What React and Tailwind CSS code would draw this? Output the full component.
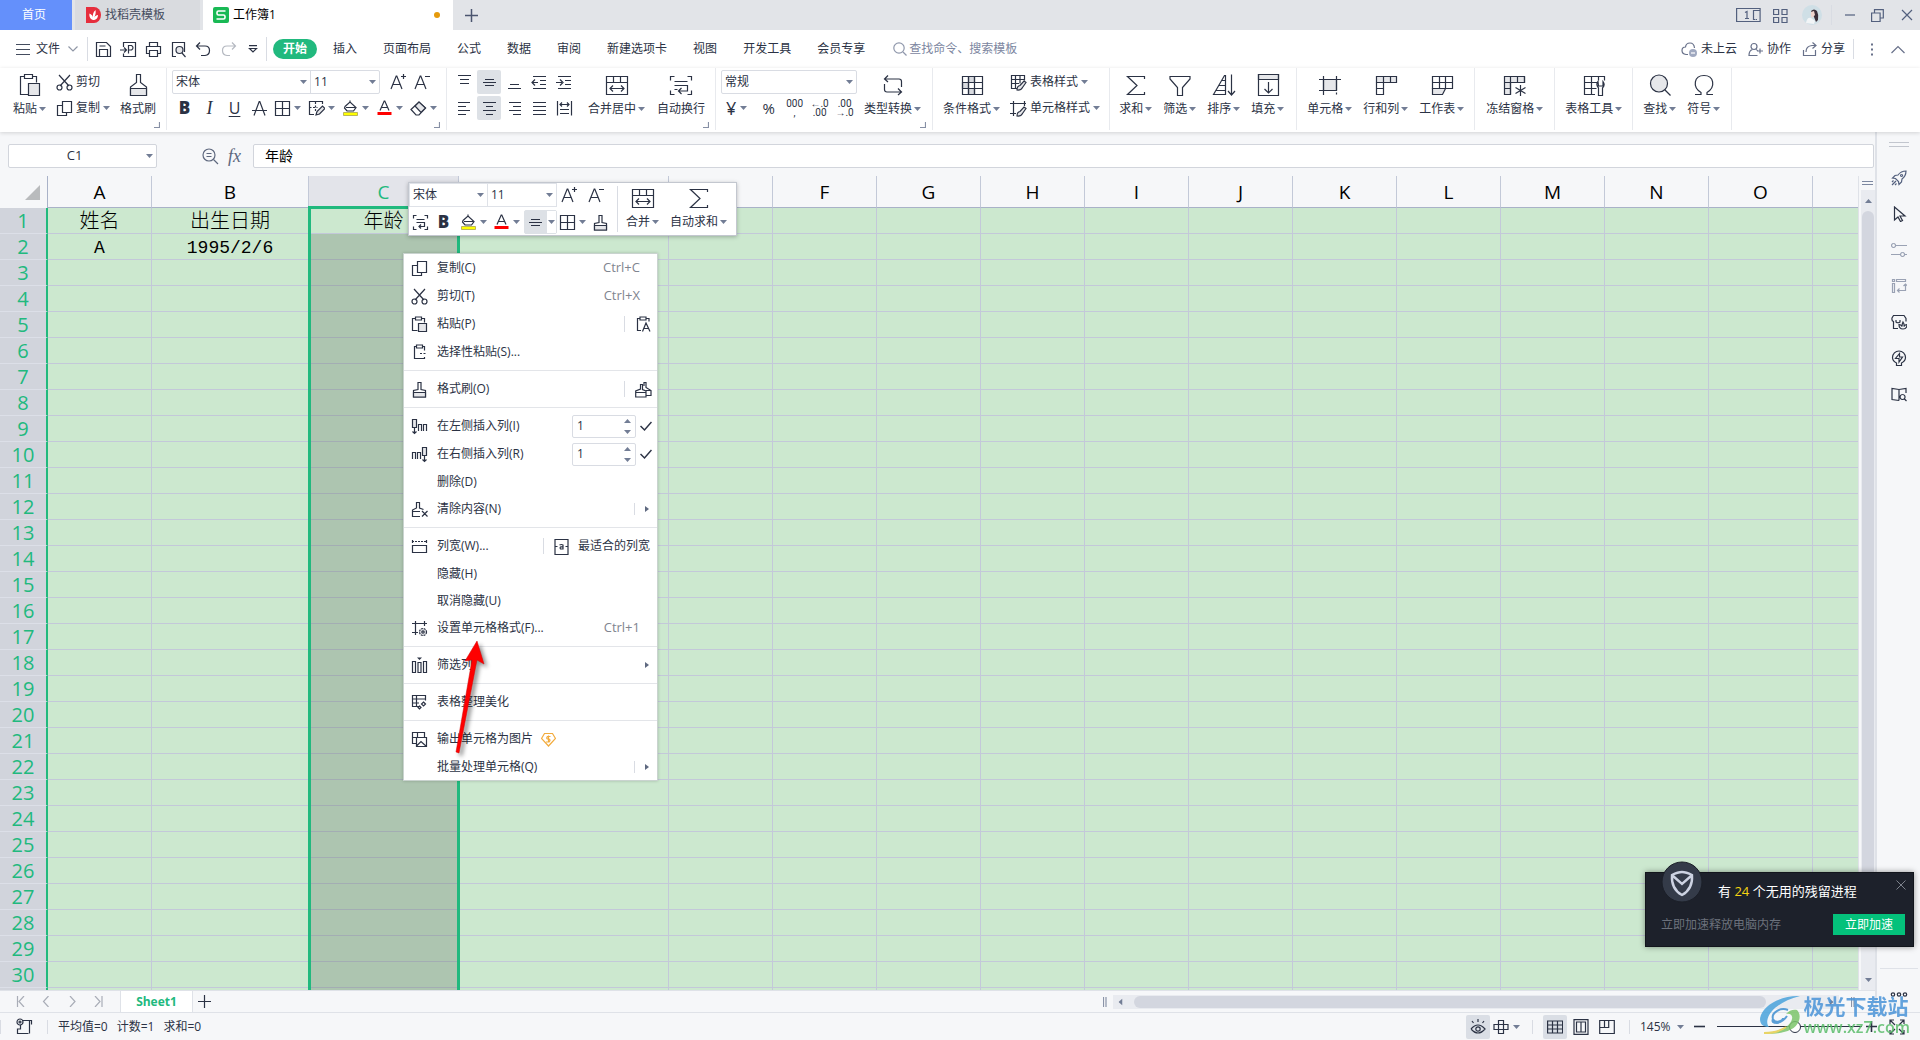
import { clsx } from 'clsx';

const Svg = ({ w = 16, h = w, className, children }) => (
  <svg
    width={w}
    height={h}
    viewBox={`0 0 ${w} ${h}`}
    fill="none"
    stroke="currentColor"
    strokeWidth="1.2"
    className={clsx('shrink-0', className)}
    aria-hidden="true"
  >
    {children}
  </svg>
);

const Caret = ({ className }) => (
  <svg width="7" height="4" viewBox="0 0 7 4" className={clsx('shrink-0 fill-[#727d95]', className)} aria-hidden="true">
    <path d="M0 0h7L3.5 4z" />
  </svg>
);

const Divider = ({ className }) => <div className={clsx('w-px shrink-0 bg-[#d9dce3]', className)} />;

/* ---------- ribbon icons, 24px ---------- */

const PasteBig = () => (
  <Svg w={24}>
    <path d="M6 3.5H2.5v18h8M15 3.5h3.5v6M6.500 1.500h8v4h-8z" />
    <path d="M10.500 10.500h11v12h-11z" fill="#e6e7ea" />
  </Svg>
);
const BrushBig = () => (
  <Svg w={24}>
    <path d="M10.500 1.500h4v8l6 4.500v8.500h-16V14l6-4.500z" />
    <path d="M4.500 15.500h16v7h-16z" fill="#e6e7ea" />
  </Svg>
);
const MergeBig = () => (
  <Svg w={24}>
    <path d="M1.500 3.500h21v18h-21zM1.500 9.500h21M8.500 3.500v6M15.500 3.500v6M5 15.500h14M8 12.500l-3 3 3 3M16 12.500l3 3-3 3" />
  </Svg>
);
const WrapBig = () => (
  <Svg w={24}>
    <path d="M5.500 3.500h-4v4M18.500 3.500h4v4M5.500 21.500h-4v-4M18.500 21.500h4v-4M5.500 8.500h13M5.500 12.500h13v5.500H10M12.500 15l-3 3 3 3M5.500 16.500h3" />
  </Svg>
);
const ConvertBig = () => (
  <Svg w={24}>
    <path d="M7 2.500L3.500 6l3.500 3M3.500 6H18q2.500 0 2.500 2.500V14M17 15.500l3.500 3.500-3.500 3M20.500 19H6q-2.500 0-2.500-2.500V11" />
  </Svg>
);
const CondBig = () => (
  <Svg w={24}>
    <path d="M8.500 3.500h6v6h-6zM2.500 9.500h6v6h-6zM8.500 15.500h6v6h-6z" fill="#d9dbe0" />
    <path d="M2.500 3.500h20v18h-20zM2.500 9.500h20M2.500 15.500h20M8.500 3.500v18M14.500 3.500v18" />
  </Svg>
);
const SumBig = () => (
  <Svg w={24}>
    <path d="M20.500 6V3.500h-17L13 12.500l-9.500 9h17V19" />
  </Svg>
);
const FilterBig = () => (
  <Svg w={24}>
    <path d="M2 3.500h20v2.500l-7.500 8.500v8h-5v-8L2 6z" />
  </Svg>
);
const SortBig = () => (
  <Svg w={24}>
    <path d="M1.500 21.500L12.500 2.500h1v19zM4 17.500h9.500M7 12.500h6.500M10 7.500h3.500M19.500 1.500v20M16 18l3.500 4 3.500-4" />
  </Svg>
);
const FillBig = () => (
  <Svg w={24}>
    <path d="M2.500 1.500h20v5h-20z" fill="#e6e7ea" />
    <path d="M2.500 1.500h20v21h-20zM12.500 9v11M8.500 16l4 4 4-4" />
  </Svg>
);
const CellBig = () => (
  <Svg w={24}>
    <path d="M5.500 6.500h13v11h-13z" fill="#e6e7ea" />
    <path d="M1 6.500h22M1 17.500h18M5.500 3v19M18.500 3v14.500M18.500 19.500v2" />
  </Svg>
);
const RowColBig = () => (
  <Svg w={24}>
    <path d="M2.500 3.500h20v6h-20z" fill="#e6e7ea" />
    <path d="M2.500 9.500v12h7v-18M2.500 15.500h7M16.500 3.500v6" />
  </Svg>
);
const SheetBig = () => (
  <Svg w={24}>
    <path d="M2.500 15.500h13l-3 6h-10z" fill="#e6e7ea" />
    <path d="M2.500 3.500h20v12h-20zM2.500 9.500h20M9.500 3.500v12M15.500 3.500v12" />
  </Svg>
);
const FreezeBig = () => (
  <Svg w={24}>
    <path d="M1.500 3.500h20v6h-14v12h-6z" fill="#e6e7ea" />
    <path d="M1.500 9.500h20v-6M7.500 3.500v18M14.500 3.500v6M1.500 15.500h6M17.500 12v11M12.500 14.500l10 6M22.500 14.500l-10 6" />
  </Svg>
);
const ToolBig = () => (
  <Svg w={24}>
    <path d="M13 21.500H2.500v-18h20v4M2.500 9.500h13M2.500 15.500h12M9.500 3.500v18M16.500 3.500v4" />
    <path d="M16 8.500q-2.500 3 .500 6.500v7.500h4v-7.500q3-3 .5-6.500v4.500h-4.500z" fill="#fff" />
  </Svg>
);
const FindBig = () => (
  <Svg w={24}>
    <circle cx="11" cy="10.500" r="8.500" fill="#e6e7ea" />
    <path d="M17 17l5.500 5.500" />
  </Svg>
);
const OmegaBig = () => (
  <Svg w={24}>
    <path d="M3 21.500h6v-2C0 14 2 2.500 12 2.500S24 14 15 19.500v2h6" />
  </Svg>
);

/* ---------- small icons ---------- */

const Scissors = () => (
  <Svg w={17}>
    <path d="M3 1l10 11M14 1L4 12" />
    <circle cx="3.500" cy="13.500" r="2.500" />
    <circle cx="13.500" cy="13.500" r="2.500" />
  </Svg>
);
const Copy = () => (
  <Svg w={17}>
    <path d="M6.500 1.500h9v11h-9zM6.500 5.500h-5v10h9v-3" />
  </Svg>
);
const Paste = () => (
  <Svg w={17}>
    <path d="M4.500 2.500h-3v12h5M11 2.500h2.500v4M4.500 1h6v3h-6z" />
    <path d="M7.500 7.500h8v8h-8z" fill="#e6e7ea" />
  </Svg>
);
const PasteSpecial = () => (
  <Svg w={17}>
    <path d="M5.500 2.500h-2v12h10v-1.500M12 2.500h1.500v4M5.500 1h6v3h-6z" />
    <path d="M9 9.500h7" strokeDasharray="2 1.500" />
  </Svg>
);
const PasteText = () => (
  <Svg w={17}>
    <path d="M5 2.500H2.500v12H6M11 2.500h3v3M5 1h6v3H5zM7.500 15.500L11 7l4 8.500M8.500 12.500h5" />
  </Svg>
);
const Brush = () => (
  <Svg w={17}>
    <path d="M7 1.500h3v7l4.500 1v6.500h-12V9.500l4.500-1z" />
    <path d="M2.500 11.500h12v4.500h-12z" fill="#e6e7ea" />
  </Svg>
);
const Brushes = () => (
  <Svg w={17}>
    <path d="M5.500 3.500h2v5l3.500 1.500v6H.700v-6l4.800-2zM.700 11.500H11M9 5V1.500h2v5l5 3v5h-5M11 9.500h5" />
  </Svg>
);
const InsertLeft = () => (
  <Svg w={17}>
    <path d="M1.500 1.500h4v8h-4z" fill="#e6e7ea" />
    <path d="M3.500 9.500v6M1.500 13.500l2 2 2-2M7.500 13v-6.500h3V13M12.500 13v-6.500h3V13" />
  </Svg>
);
const InsertRight = () => (
  <Svg w={17}>
    <path d="M11.500 1.500h4v8h-4z" fill="#e6e7ea" />
    <path d="M13.500 9.500v6M11.500 13.500l2 2 2-2M1.500 13v-6.500h3V13M6.500 13v-6.500h3V13" />
  </Svg>
);
const ClearContent = () => (
  <Svg w={17}>
    <path d="M9 15.500H1.500V9l4-2V1.500h3V7l4 1.500M1.500 10.500H9M11 10l5.500 5.500M16.500 10L11 15.500" />
  </Svg>
);
const ColWidth = () => (
  <Svg w={17}>
    <path d="M1.500 7.500h14v7h-14z" />
    <path d="M1 3.500h15" strokeDasharray="2 1" />
    <path d="M1.500 2v3M15.500 2v3" />
  </Svg>
);
const BestFit = () => (
  <Svg w={17}>
    <path d="M2 1.500h13v15H2zM2 8.500h2.500M12.500 8.500H15" />
    <path d="M6.500 7q2-1 3.500 0v4H7.500q-1-1.500.500-2.200H10" />
  </Svg>
);
const FormatCell = () => (
  <Svg w={17}>
    <path d="M1 3.500h15M4.500 1v14M1 12.500h6M13.500 1v5" />
    <circle cx="12" cy="12" r="3.500" fill="#e6e7ea" strokeDasharray="2 .8" />
    <circle cx="12" cy="12" r="1.200" />
  </Svg>
);
const FilterCol = () => (
  <Svg w={17}>
    <path d="M1.500 4.500h3v11h-3zM7 5.500h3v10H7zM12.500 4.500h3v11h-3z" />
    <path d="M6 .500h5L8.500 3z" fill="currentColor" stroke="none" />
  </Svg>
);
const Beautify = () => (
  <Svg w={17}>
    <path d="M8 12.500H1.500v-11h13v5M1.500 5H14.500M1.500 9H8M5.500 1.500v11M12.500 8l2 2-2 2-2-2zM8.500 12l1.500 1.500L8.500 15 7 13.500z" />
  </Svg>
);
const ExportImg = () => (
  <Svg w={17}>
    <path d="M5.500 12.500h-4v-11h12v5M1.500 6.500h4M6.500 1.500v5M5.500 6.500h10v9h-10zM5.500 15l4.500-4.500 5.500 5" />
  </Svg>
);
const Coin = () => (
  <svg width="15" height="15" viewBox="0 0 15 15" fill="none" stroke="#f2ab3d" strokeWidth="1.200" className="ml-2" aria-hidden="true">
    <path d="M3.500 1.500h8l3 5-7 7.500-7-7.500z" />
    <path d="M9.500 4.500h-3q-1.500 1.500 0 2.500h1.500q2 1 0 3h-3M7.500 3.500v7" />
  </svg>
);
const Bucket = () => (
  <Svg w={17}>
    <path d="M3 6.500L8 2l6 5.500-2.500 3.500H5L2.500 8zM4 7.500h9M8 2V.500" />
    <path d="M1.500 12.500h14v3h-14z" fill="#ffff00" stroke="#a9a44f" strokeWidth=".8" />
  </Svg>
);
const FontColor = () => (
  <Svg w={17}>
    <path d="M4 10.500L8.200 1h.600L13 10.500M5.500 7.500h6" />
    <path d="M1.500 13.500h14" stroke="#ff0000" strokeWidth="3" />
  </Svg>
);
const Strike = () => (
  <Svg w={17}>
    <path d="M3 15.500L8.200 1.500h.600L14 15.500M1 10.500h15" />
  </Svg>
);
const Borders = () => (
  <Svg w={17}>
    <path d="M1.500 1.500h14v14h-14zM8.500 1.500v14M1.500 8.500h14" />
  </Svg>
);
const PenBorder = () => (
  <Svg w={17}>
    <path d="M14.500 4v-2.500h-13v13H6" />
    <path d="M1.500 7.500h8M7.500 2v9" strokeDasharray="2 1.500" />
    <path d="M8 15l1-3.500L14.500 6 17 8.500l-5.500 5.500z" fill="#e6e7ea" />
  </Svg>
);
const Eraser = () => (
  <Svg w={17}>
    <path d="M1 9.500L9 2l6.500 6L9 15H6z" />
    <path d="M5 6l6 6.500 4.500-4.500L9 2z" fill="#e6e7ea" />
  </Svg>
);
const WrapSmall = () => (
  <Svg w={17}>
    <path d="M4.500 1.500h-3v3M12.500 1.500h3v3M4.500 15.500h-3v-3M12.500 15.500h3v-3M4.500 5.500h8M4.500 8.500h8v4H7M9 10.500l-2 2 2 2" />
  </Svg>
);
const GrowFont = () => (
  <Svg w={18}>
    <path d="M2 16L7.200 3h.600L13 16M4 11.500h7M12 3.500h5M14.500 1v5" />
  </Svg>
);
const ShrinkFont = () => (
  <Svg w={18}>
    <path d="M2 16L7.200 3h.600L13 16M4 11.500h7M12 3.500h5" />
  </Svg>
);
const TableStyle = () => (
  <Svg w={17}>
    <path d="M7 14.500H1.500v-13h13v5M1.500 5.500h13M1.500 9.500H9M5.500 1.500v13M10 1.500v8" />
    <path d="M7 16q0-4 3-4.500l4-4.500 2 1.500-3.500 5q-1.500 3-5.500 2.500z" fill="#e6e7ea" />
  </Svg>
);
const CellStyle = () => (
  <Svg w={17}>
    <path d="M0 3.500h16M3.500 1v15M0 13.500h6M14.500 1v5" />
    <path d="M7 16q0-4 3-4.500l4-4.500 2 1.500-3.500 5q-1.500 3-5.500 2.500z" fill="#e6e7ea" />
  </Svg>
);

const alignPaths = [
  'M2 1.500h13M4 5.500h9M4 9.500h9',
  'M2 8.500h13M4 5.500h9M4 11.500h9',
  'M2 14.500h13M4 10.500h9',
  'M2 2.500h13M9 6.500h6M9 10.500h6M2 14.500h13M1 8.500h6M4 5.500l-3 3 3 3',
  'M2 2.500h13M9 6.500h6M9 10.500h6M2 14.500h13M0 8.500h6M4 5.500l3 3-3 3',
];
const alignPaths2 = [
  'M2 2.500h12M2 6.500h8M2 10.500h12M2 14.500h8',
  'M2 2.500h13M5 6.500h7M2 10.500h13M5 14.500h7',
  'M3 2.500h12M7 6.500h8M3 10.500h12M7 14.500h8',
  'M2 2.500h13M2 6.500h13M2 10.500h13M2 14.500h13',
  'M1.500 1v14.500M15.500 1v14.500M4 4.500h9M6 2.500l-2 2 2 2M11 2.500l2 2-2 2M4 9.500h9M4 13.500h9',
];

/* ---------- title bar ---------- */

const TitleBar = () => (
  <header className="flex h-[30px] shrink-0 items-stretch bg-[#e2e4e8] text-[#2d3446]">
    <button className="w-[72px] bg-[#6490fb] pr-1 text-white">首页</button>
    <button className="ml-[3px] flex w-[125px] items-center gap-1 bg-[#d9dbdf] pl-[11px] text-[#454c5e]">
      <svg width="15" height="16" viewBox="0 0 15 16" aria-hidden="true">
        <path d="M0 0h8a7 8 0 0 1 0 16H0z" fill="#e62e3d" />
        <path d="M7 13C4 12 3 9 3.500 6.500 6 8 7 9 7 11 6.500 8 7 5 9.500 3 10 6 9.500 8 8 10.500c1-1.500 2.500-2.500 4-2.500 0 3-2 5-5 5z" fill="#fff" />
      </svg>
      <span>找稻壳模板</span>
    </button>
    <button className="ml-[3px] flex w-[250px] items-center gap-1 bg-white pl-[10px] text-black">
      <svg width="16" height="16" viewBox="0 0 16 16" aria-hidden="true">
        <rect width="16" height="16" rx="2" fill="#19b955" />
        <path d="M12.500 4H5.500Q4 4 4 5.500v1Q4 8 5.500 8h5q1.500 0 1.500 1.500v1q0 1.500-1.500 1.500h-7" fill="none" stroke="#fff" strokeWidth="1.600" />
      </svg>
      <span className="grow text-left">工作簿1</span>
      <span className="mr-[13px] size-[6px] rounded-full bg-[#e59a0c]" />
    </button>
    <button className="ml-3 text-[#4b556f]" aria-label="新建">
      <Svg w={13}><path d="M6.500 0v13M0 6.500h13" strokeWidth="1.500" /></Svg>
    </button>
    <div className="ml-auto flex items-center pr-[7px] text-[#53607e]">
      <button aria-label="窗口" className="mr-[12px]">
        <Svg w={25} h={16}>
          <path d="M.600 1.500h23.500v13H.600zM17.500 3v10M17.500 3.500h6M17.500 12.500h2M20 12.500h1M9 5.500l2-1v7M9 11.500h4" />
        </Svg>
      </button>
      <button aria-label="应用" className="mr-[14px]">
        <Svg w={15}><path d="M.600 1.500h5v5h-5zM9 1.500h5v5H9zM.600 9.500h5v5h-5zM9 9.500h5v5H9z" /></Svg>
      </button>
      <svg width="20" height="20" viewBox="0 0 20 20" aria-hidden="true">
        <circle cx="10" cy="10" r="10" fill="#cfdfe6" />
        <path d="M9 6q3-3 6 0 2 4 1 9l-2 2-2-5z" fill="#3b2e38" />
        <path d="M9 7l3-1 1 4-3 3-1-2z" fill="#f0d4cd" />
        <path d="M4 18q1-6 5-5l4 3-1 3z" fill="#f2f5f7" />
      </svg>
      <Divider className="ml-[9px] mr-3 h-5 bg-[#c5c8ce]" />
      <button aria-label="最小化" className="mr-[15px]"><Svg w={12}><path d="M1 6h10" /></Svg></button>
      <button aria-label="还原" className="mr-[17px]">
        <Svg w={13}><path d="M.600 4h8.500v8.500H.600zM3.500 4V.600h8.800V9H9" /></Svg>
      </button>
      <button aria-label="关闭"><Svg w={12}><path d="M1 1l10 10M11 1L1 11" /></Svg></button>
    </div>
  </header>
);

/* ---------- menu bar ---------- */

const menus = ['插入', '页面布局', '公式', '数据', '审阅', '新建选项卡', '视图', '开发工具', '会员专享'];

const MenuBar = () => (
  <nav className="flex h-[38px] shrink-0 items-center bg-white pl-4">
    <button className="flex items-center">
      <Svg w={14} className="text-[#444c5e]"><path d="M0 2.500h14M0 7.500h14M0 12.500h14" /></Svg>
      <span className="ml-[6px]">文件</span>
      <Svg w={10} h={6} className="ml-2 text-[#9097a6]"><path d="M.500.500l4.500 4.500L9.500.500" /></Svg>
    </button>
    <Divider className="ml-[9px] h-6" />
    <div className="ml-[7px] flex items-center gap-2">
      <button aria-label="保存"><Svg w={17}><path d="M1.500 1.500h10l4 4v10h-14zM4.500 15.500v-7h8v7M4.500 5h6" /></Svg></button>
      <button aria-label="输出"><Svg w={17}><path d="M3.500 6v-4.500h12v14h-12v-3M0 9h6M4 6.500L6.500 9 4 11.500M8.500 12.500v-8h3q3 2 0 4.500h-3" /></Svg></button>
      <button aria-label="打印"><Svg w={17}><path d="M4.500 5.500v-4h8v4M4 12.500H1.500v-7h14v7H13M4.500 9.500h8v6h-8z" /></Svg></button>
      <button aria-label="预览">
        <Svg w={17}><path d="M6 15.500H2.500v-14h12V11" /><circle cx="9.500" cy="9" r="3.500" fill="#e6e7ea" /><path d="M12 12l3.500 4" /></Svg>
      </button>
      <button aria-label="撤销"><Svg w={17}><path d="M5 1.500l-3.500 3.500L5 8.500M2 5h8q4.500 0 4.500 4.500T10 14.500H6" /></Svg></button>
      <button aria-label="恢复" className="text-[#b5b9c1]"><Svg w={17}><path d="M12 1.500l3.500 3.500L12 8.500M15 5H7Q2.500 5 2.500 9.500T7 14.500h3" /></Svg></button>
      <button aria-label="更多" className="ml-[3px]"><Svg w={10} h={8}><path d="M1 .600h8M1.500 3.500h7L5 7z" /></Svg></button>
    </div>
    <Divider className="ml-2 h-6" />
    <button className="ml-[6px] h-5 w-11 rounded-full bg-[#21b97e] font-bold text-white">开始</button>
    <div className="ml-4 flex gap-[26px]">
      {menus.map((m) => <button key={m}>{m}</button>)}
    </div>
    <label className="ml-7 flex items-center gap-[2px] text-[#9098ac]">
      <Svg w={14}><circle cx="6" cy="6" r="5.200" /><path d="M10 10l3.500 3.500" /></Svg>
      <input className="w-[130px] outline-none placeholder:text-[#7c86a0]" placeholder="查找命令、搜索模板" />
    </label>
    <div className="ml-auto flex items-center pr-[15px]">
      <button className="flex items-center gap-[3px]">
        <Svg w={17} className="text-[#68718a]">
          <path d="M7 13.500H5Q1 13 1 9.500T4.500 6Q5 2 9 2t4.500 5" />
          <circle cx="12" cy="12" r="4" fill="#a0a9c0" stroke="none" /><path d="M10 12h4" stroke="#fff" />
        </Svg>
        未上云
      </button>
      <button className="ml-[11px] flex items-center gap-1">
        <Svg w={15} className="text-[#68718a]"><circle cx="6" cy="4.500" r="3" /><path d="M4.500 7.500Q1 8.500 1 13.500h8.500M8 7.500q1.500.500 2 2M12 6.500v5M9.500 9H15" /></Svg>
        协作
      </button>
      <button className="ml-[11px] flex items-center gap-1">
        <Svg w={15} className="text-[#68718a]"><path d="M1.500 8v5.500h12V8M4 10q0-6 6-6.500h4M10.500.500l3.500 3-3.500 3" /></Svg>
        分享
      </button>
      <Divider className="ml-2 h-5" />
      <Svg w={4} h={13} className="ml-4 text-[#68718a]"><path d="M2 .500v2M2 5.500v2M2 10.500v2" strokeWidth="2" /></Svg>
      <button aria-label="收起" className="ml-[17px]"><Svg w={14} h={9} className="text-[#68718a]"><path d="M.500 8L7 1.500 13.500 8" /></Svg></button>
    </div>
  </nav>
);

/* ---------- ribbon ---------- */

const Group = ({ className, corner, children }) => (
  <div className={clsx('relative flex shrink-0 border-r border-[#e8eaee]', className)}>
    {children}
    {corner && <Svg w={6} className="absolute right-[6px] bottom-[2px] text-[#8790a5]"><path d="M0 5.500h5.500V0" /></Svg>}
  </div>
);

const BigButton = ({ icon, label, caret = true, className = 'pt-[5px]' }) => (
  <button className={clsx('flex flex-col items-center gap-[3px] self-start', className)}>
    {icon}
    <span className="flex h-[18px] items-center gap-[2px]">
      {label}
      {caret && <Caret />}
    </span>
  </button>
);

const SmallButton = ({ icon, label, caret }) => (
  <button className="flex h-6 items-center gap-[3px]">
    {icon}
    <span>{label}</span>
    {caret && <Caret />}
  </button>
);

const IconCaret = ({ icon, name, width = 'w-[34px]' }) => (
  <button aria-label={name} className={clsx('flex h-6 shrink-0 items-center gap-[3px] pl-[2px]', width)}>
    {icon}
    <Caret />
  </button>
);

const AlignRow = ({ paths, row }) => (
  <div className="flex h-6 gap-px">
    {paths.map((d, i) => (
      <button key={d} aria-label={`对齐 ${row}-${i + 1}`} className={clsx('grid w-6 place-items-center rounded-xs', i === 1 && 'bg-[#dde1e6]')}>
        <Svg w={17}><path d={d} /></Svg>
      </button>
    ))}
  </div>
);

const Dropdown = ({ value, label, className }) => (
  <div className={clsx('relative flex items-center', className)}>
    <select aria-label={label} defaultValue={value} className="h-full w-full appearance-none pl-[3px] outline-none">
      <option>{value}</option>
    </select>
    <Caret className="pointer-events-none absolute right-[3px]" />
  </div>
);

const Decimal = ({ top, bottom, name }) => (
  <button aria-label={name} className="flex w-[25px] flex-col items-center font-['Roboto'] text-[10px] leading-[9px]">
    <span>{top}</span>
    <span>{bottom}</span>
  </button>
);

const Ribbon = () => (
  <section className="relative z-10 flex h-16 shrink-0 overflow-hidden bg-white pb-[2px] shadow-[0_1px_4px_rgba(0,0,0,0.15)]">
    <Group className="gap-[10px] pr-[10px] pl-[13px]" corner>
      <BigButton icon={<PasteBig />} label="粘贴" />
      <div className="flex flex-col gap-[2px] pt-[2px]">
        <SmallButton icon={<Scissors />} label="剪切" />
        <SmallButton icon={<Copy />} label="复制" caret />
      </div>
      <BigButton icon={<BrushBig />} label="格式刷" caret={false} />
    </Group>

    <Group className="flex-col gap-[2px] pt-[2px] pr-1 pl-[5px]" corner>
      <div className="flex h-6">
        <div className="mr-[5px] flex w-[208px] rounded-xs border border-[#d9dce3]">
          <Dropdown value="宋体" label="字体" className="w-[138px] border-r border-[#d9dce3]" />
          <Dropdown value="11" label="字号" className="grow" />
        </div>
        <button aria-label="增大字号" className="w-6 pl-1"><GrowFont /></button>
        <button aria-label="减小字号" className="w-6 pl-1"><ShrinkFont /></button>
      </div>
      <div className="flex h-6">
        <button className="w-[25px] font-['Open_Sans'] text-[17px] leading-6 font-extrabold">B</button>
        <button className="w-[25px] font-['Liberation_Serif'] text-[18px] leading-6 italic">I</button>
        <button className="w-[25px] text-[16px] leading-6 underline underline-offset-2">U</button>
        <button aria-label="删除线" className="grid w-[25px] place-items-center"><Strike /></button>
        <IconCaret icon={<Borders />} name="边框" />
        <IconCaret icon={<PenBorder />} name="绘制边框" />
        <IconCaret icon={<Bucket />} name="填充颜色" />
        <IconCaret icon={<FontColor />} name="字体颜色" />
        <IconCaret icon={<Eraser />} name="清除" />
      </div>
    </Group>

    <Group className="gap-3 pr-[10px] pl-[5px]" corner>
      <div className="flex flex-col gap-[2px] pt-[2px]">
        <AlignRow paths={alignPaths} row={1} />
        <AlignRow paths={alignPaths2} row={2} />
      </div>
      <BigButton icon={<MergeBig />} label="合并居中" />
      <BigButton icon={<WrapBig />} label="自动换行" caret={false} />
    </Group>

    <Group className="gap-[7px] pr-[11px] pl-[5px]" corner>
      <div className="flex flex-col gap-[2px] pt-[2px]">
        <Dropdown value="常规" label="数字格式" className="h-6 w-[136px] rounded-xs border border-[#d9dce3]" />
        <div className="flex h-6 items-center">
          <button className="flex w-[34px] items-center gap-1 pl-[5px] text-[18px]">¥<Caret /></button>
          <button className="w-[27px] text-[15px]">%</button>
          <Decimal top="000" bottom="," name="千位分隔" />
          <Decimal top="←.0" bottom=".00" name="增加小数" />
          <Decimal top=".00" bottom="→.0" name="减少小数" />
        </div>
      </div>
      <BigButton icon={<ConvertBig />} label="类型转换" />
    </Group>

    <Group className="gap-[10px] pr-[9px] pl-[10px]">
      <BigButton icon={<CondBig />} label="条件格式" />
      <div className="flex flex-col gap-[2px] pt-[2px]">
        <SmallButton icon={<TableStyle />} label="表格样式" caret />
        <SmallButton icon={<CellStyle />} label="单元格样式" caret />
      </div>
    </Group>

    <Group className="gap-[11px] pr-3 pl-[9px]">
      <BigButton icon={<SumBig />} label="求和" />
      <BigButton icon={<FilterBig />} label="筛选" />
      <BigButton icon={<SortBig />} label="排序" />
      <BigButton icon={<FillBig />} label="填充" />
    </Group>
    <Group className="gap-[11px] px-[10px]">
      <BigButton icon={<CellBig />} label="单元格" />
      <BigButton icon={<RowColBig />} label="行和列" />
      <BigButton icon={<SheetBig />} label="工作表" />
    </Group>
    <Group className="px-[11px]"><BigButton icon={<FreezeBig />} label="冻结窗格" /></Group>
    <Group className="px-[10px]"><BigButton icon={<ToolBig />} label="表格工具" /></Group>
    <Group className="gap-[11px] pr-[11px] pl-[10px]">
      <BigButton icon={<FindBig />} label="查找" />
      <BigButton icon={<OmegaBig />} label="符号" />
    </Group>
  </section>
);

/* ---------- formula bar ---------- */

const FormulaBar = () => (
  <div className="flex h-11 shrink-0 items-start pt-3 pl-2">
    <div className="relative flex h-6 w-[149px] items-center rounded-xs border border-[#d2d5dc] bg-white">
      <input aria-label="名称框" defaultValue="C1" className="w-full pr-4 text-center text-[13px] outline-none" />
      <Caret className="absolute right-[3px]" />
    </div>
    <div className="ml-[45px] flex h-6 w-[51px] items-center gap-[9px] text-[#5e687e]">
      <Svg w={17}><circle cx="7" cy="7" r="6" /><path d="M11.500 11.500l4.500 4.500M4.500 5.500h5M4.500 8.500h5" /></Svg>
      <span className="font-['Liberation_Serif'] text-[18px] italic">fx</span>
    </div>
    <input
      aria-label="编辑栏"
      defaultValue="年龄"
      className="h-6 grow rounded-xs border border-[#d2d5dc] bg-white pb-[3px] pl-[11px] text-[14px] text-black outline-none"
    />
    <div className="w-px" />
  </div>
);

/* ---------- sheet ---------- */

const columns = ['A', 'B', 'C', 'D', 'E', 'F', 'G', 'H', 'I', 'J', 'K', 'L', 'M', 'N', 'O'];
const data = {
  A1: '姓名', B1: '出生日期', C1: '年龄', A2: 'A', B2: '1995/2/6',
};
const rows = Array.from({ length: 31 }, (_, i) => i + 1);

const Sheet = () => (
  <div className="relative min-h-0 grow overflow-hidden">
    <table className="w-full table-fixed border-separate border-spacing-0 text-center text-black">
      <colgroup>
        <col className="w-12" />
        <col className="w-[104px]" />
        <col className="w-[157px]" />
        <col className="w-[150px]" />
        <col className="w-[210px]" />
        {columns.slice(4).map((c) => <col key={c} className="w-[104px]" />)}
        <col />
      </colgroup>
      <thead>
        <tr className="h-8 font-['Open_Sans'] text-[19px] leading-6">
          <th className="border-r border-r-[#a9b2c8] pr-[7px] align-middle">
            <svg width="15" height="15" viewBox="0 0 15 15" className="ml-auto fill-[#b9bbbd]" aria-hidden="true"><path d="M15 0v15H0z" /></svg>
          </th>
          {columns.map((c) => (
            <th
              key={c}
              className={clsx(
                'border-r border-b border-r-[#c3c9d8] border-b-[#a9b2c8] p-0 font-normal',
                c === 'C' && 'bg-[#e3e4ea] text-[#21b97e]',
              )}
            >
              {c}
            </th>
          ))}
          <th className="border-b border-b-[#a9b2c8]" />
        </tr>
      </thead>
      <tbody>
        {rows.map((r) => (
          <tr key={r} className="h-[26px] text-[20px] leading-[25px]">
            <th className="border-r-2 border-b border-r-[#21b97e] border-b-[#dcdfe8] bg-[#d1d4dc] p-0 font-['Open_Sans'] font-normal text-[#21b97e]">
              {r <= 30 && r}
            </th>
            {columns.map((c) => (
              <td
                key={c}
                className={clsx(
                  "border-r border-b px-0 pt-1 pb-0 font-['Liberation_Mono','Noto_Sans_CJK_SC',monospace] leading-[21px] font-light",
                  c === 'C' && r > 1 ? 'border-[#a3adb3] bg-[#adc5b0]' : 'border-[#c3c8d9] bg-[#cce8cf]',
                  r === 2 && 'text-[18px]',
                )}
              >
                {data[c + r]}
              </td>
            ))}
            <td className="border-b border-[#c3c8d9] bg-[#cce8cf]" />
          </tr>
        ))}
      </tbody>
    </table>
    <div className="absolute top-[30px] -bottom-1 left-[308px] w-[152px] border-3 border-[#21b97e]" />
  </div>
);

const VScroll = () => (
  <div className="flex w-[17px] shrink-0 flex-col items-center border-l border-[#dfe2e8] pt-[5px]">
    <Svg w={11} h={5} className="text-[#7c87a0]"><path d="M0 .500h11M0 3.500h11" /></Svg>
    <div className="mt-1 flex grow flex-col items-center self-end bg-[#e9ebf0]">
      <div className="flex h-[21px] w-[14px] items-center justify-center"><Caret className="rotate-180" /></div>
      <div className="w-3 grow rounded-full bg-[#d3d6df]" />
      <div className="mt-9 flex h-[21px] items-center"><Caret /></div>
    </div>
  </div>
);

const sideIcons = [
  {
    name: '快速启动',
    cls: 'text-[#53607e]',
    d: 'M15 1Q10 1 7 5L4 5.500 1.500 8l3 .5 3 3 .5 3 2.500-2.500.500-3Q15 6 15 1zM10.500 4.500a1 1 0 1 0 .1 0M1 15l4-4M1 12l1.500-1.500M4 15l1.500-1.500',
  },
  { name: '选择', cls: 'text-[#2b3244]', d: 'M3.500 1v13l3.500-3 2.500 4.500 2-1-2.500-4.500h5z' },
  { name: '属性', cls: 'text-[#9aa2b4]', d: 'M4.500 3.500H16M0 12.500h9M13.500 12.500H16M2.500 1.500a2 2 0 1 0 .1 0M11.500 10.500a2 2 0 1 0 .1 0' },
  { name: '分析', cls: 'text-[#9aa2b4]', d: 'M1.500 1.500h2v2h-2zM5.500 1.500h9v2h-9zM1.500 5.500h2v9h-2zM14.500 6v6.500h-8M12.500 8l2-2 2 2M8.500 10.500l-2 2 2 2' },
  { name: '模板', cls: 'text-[#2b3244]', d: 'M7 14.500H2.500V7.500Q.500 7 1 4l1.500-2.500h10.500L15 4.500v3M5 6v2q2 1.500 4 0V6M12 15q-4 0-4-4.500 2 0 3 2 0-2.500 1-4.500 1.500 2 1 4.500 1-2 3-2 0 4.500-4 4.500z' },
  { name: '灵感', cls: 'text-[#2b3244]', d: 'M5.500 15.500h5V13q4-2 4-5.500a6.500 6.500 0 1 0-13 0Q1.500 11 5.500 13zM8.500 3.500l-4 5H8v3.500l3.500-5H8.500z' },
  { name: '手册', cls: 'text-[#2b3244]', d: 'M8 14.500L1 13.500v-11l7 1 7-1V7M8 3.500v11M11.500 8.500a2.500 2.500 0 1 0 .1 0M13.500 13l2 2' },
];

const SideBar = () => (
  <aside className="flex w-[45px] shrink-0 flex-col items-center border-l-2 border-[#dfe2e8] pt-[10px]">
    <Svg w={20} h={5} className="text-[#c2c6ce]"><path d="M0 .500h20M0 4.500h20" /></Svg>
    <div className="mt-[23px] flex flex-col gap-5">
      {sideIcons.map((s) => (
        <button key={s.name} aria-label={s.name} className={s.cls}><Svg><path d={s.d} /></Svg></button>
      ))}
    </div>
    <div className="mt-auto mb-[23px] h-px w-[38px] bg-[#dfe2e8]" />
    <Svg w={18} h={5} className="mb-[15px]"><circle cx="3" cy="2.500" r="1.700" /><circle cx="9" cy="2.500" r="1.700" /><circle cx="15" cy="2.500" r="1.700" /></Svg>
  </aside>
);

const SheetTabs = () => (
  <div className="flex h-[22px] shrink-0 items-center border-t border-[#dfe2e8] pl-4">
    <div className="flex gap-[17px] pr-[17px] text-[#a9adb7]">
      {['M1.500 0v11M8 0L3 5.500 8 11', 'M6.500 0l-5 5.500 5 5.500', 'M2 0l5 5.500L2 11', 'M1 0l5 5.500L1 11M8 0v11'].map((d, i) => (
        <button key={d} aria-label={`工作表导航 ${i + 1}`}><Svg w={9} h={11}><path d={d} /></Svg></button>
      ))}
    </div>
    <button className="h-full w-[73px] border-x border-[#dfe2e8] bg-white font-['Open_Sans'] font-bold text-[#21b97e]">Sheet1</button>
    <button aria-label="新建工作表" className="ml-[5px]"><Svg w={13}><path d="M6.500 0v13M0 6.500h13" /></Svg></button>
    <div className="ml-auto flex w-[772px] items-center">
      <Svg w={4} h={10} className="mr-[6px] text-[#8b94a8]"><path d="M.500 0v10M3 0v10" /></Svg>
      <div className="flex h-[14px] grow items-center bg-[#e9ebf0] px-1">
        <Caret className="rotate-90" />
        <div className="ml-[10px] h-3 w-[632px] rounded-full bg-[#d3d6df]" />
        <Caret className="ml-auto -rotate-90" />
      </div>
      <Svg w={4} h={10} className="mr-5 ml-3 text-[#8b94a8]"><path d="M.500 0v10M3 0v10" /></Svg>
    </div>
  </div>
);

const StatusBar = () => (
  <footer className="flex h-7 shrink-0 items-center border-t border-[#dfe2e8]">
    <Divider className="h-[14px]" />
    <button aria-label="宏" className="ml-[15px]">
      <Svg w={17}>
        <circle cx="4" cy="4" r="3" /><circle cx="4" cy="4" r="1" />
        <path d="M7 2.500h8.500v4M13.500 3v12.500M4.500 7v4h-3v4.500h11" />
      </Svg>
    </button>
    <Divider className="ml-[14px] h-[14px]" />
    <div className="ml-[10px] flex gap-[9px]">
      <span>平均值=0</span>
      <span>计数=1</span>
      <span>求和=0</span>
    </div>
    <div className="ml-auto flex items-center pr-[15px]">
      <button aria-label="护眼" className="grid size-6 place-items-center rounded-xs bg-[#dadee5]">
        <Svg><path d="M1 10q7-8 14 0-7 8-14 0M8 0v3M2 2l1.500 2M14 2l-1.500 2" /><circle cx="8" cy="10" r="2.200" /></Svg>
      </button>
      <button aria-label="阅读模式" className="ml-[3px] flex items-center gap-1">
        <Svg><path d="M5.500 1.500h5v13h-5zM1 5.500h14v5H1z" /></Svg>
        <Caret />
      </button>
      <Divider className="mr-[10px] ml-3 h-[14px]" />
      <button aria-label="普通视图" className="grid size-6 place-items-center rounded-xs bg-[#dadee5]">
        <Svg><path d="M.600 2h15v12H.600zM.600 6h15M.600 10h15M5.500 2v12M10.500 2v12" /></Svg>
      </button>
      <button aria-label="分页预览" className="ml-[6px]"><Svg><path d="M1 .700h14v14.600H1zM3.500 3h4.500v10H3.500zM8 3h4.500v10H8z" /></Svg></button>
      <button aria-label="页面视图" className="ml-[10px]"><Svg><path d="M.700 1.500h14.600v13H.700zM.700 8.500h9v-7M5.500 1.500v7" /></Svg></button>
      <Divider className="mr-[10px] ml-[14px] h-[14px]" />
      <button className="flex w-[44px] items-center justify-between">145%<Caret /></button>
      <button aria-label="缩小" className="ml-[10px]"><Svg w={11}><path d="M0 5.500h11" strokeWidth="1.600" /></Svg></button>
      <input
        type="range"
        aria-label="缩放"
        defaultValue="54"
        className="ml-3 h-3 w-[145px] appearance-none bg-[linear-gradient(#2b3244,#2b3244)] bg-[length:100%_1px] bg-center bg-no-repeat [&::-webkit-slider-thumb]:size-3 [&::-webkit-slider-thumb]:appearance-none [&::-webkit-slider-thumb]:rounded-full [&::-webkit-slider-thumb]:border [&::-webkit-slider-thumb]:border-[#2b3244] [&::-webkit-slider-thumb]:bg-white"
      />
      <button aria-label="放大" className="ml-1"><Svg w={11}><path d="M0 5.500h11M5.500 0v11" strokeWidth="1.600" /></Svg></button>
      <button aria-label="全屏" className="ml-3"><Svg><path d="M1 5V1h4M11 1h4v4M1 11v4h4M11 15h4v-4M1 1l5 5M15 1l-5 5M1 15l5-5M15 15l-5-5" /></Svg></button>
    </div>
  </footer>
);

/* ---------- floating pieces ---------- */

const MiniToolbar = () => (
  <div className="absolute top-[182px] left-[408px] z-20 flex h-[54px] w-[329px] border border-[#c3c7cf] bg-white shadow-[0_1px_4px_rgba(0,0,0,0.25)]">
    <div className="w-[208px] shrink-0">
      <div className="flex h-6">
        <div className="mr-[3px] flex w-[148px] border border-[#dfe2e8]">
          <Dropdown value="宋体" label="浮动字体" className="w-[78px] border-r border-[#dfe2e8]" />
          <Dropdown value="11" label="浮动字号" className="grow" />
        </div>
        <button aria-label="增大" className="w-[27px]"><GrowFont /></button>
        <button aria-label="减小" className="w-[27px]"><ShrinkFont /></button>
      </div>
      <div className="mt-[3px] flex h-6 items-center pl-[3px]">
        <button aria-label="换行"><WrapSmall /></button>
        <button className="w-[29px] font-['Open_Sans'] text-[17px] leading-6 font-extrabold">B</button>
        <IconCaret icon={<Bucket />} name="填充" width="w-[33px]" />
        <IconCaret icon={<FontColor />} name="颜色" width="w-[33px]" />
        <button aria-label="居中" className="flex h-6 w-[33px] shrink-0 items-center rounded-xs border border-[#dde1e6] bg-[#dde1e6] pl-[2px]">
          <Svg w={17}><path d={alignPaths[1]} /></Svg>
          <span className="ml-[3px] grid h-full grow place-items-center bg-white"><Caret /></span>
        </button>
        <IconCaret icon={<Borders />} name="框线" width="w-[33px]" />
        <button aria-label="刷" className="ml-[2px]"><Brush /></button>
      </div>
    </div>
    <Divider className="my-[3px]" />
    <div className="flex gap-[11px] pl-2">
      <BigButton icon={<MergeBig />} label="合并" className="pt-[3px]" />
      <BigButton icon={<SumBig />} label="自动求和" className="pt-[3px]" />
    </div>
  </div>
);

const SubArrow = ({ line }) => (
  <span className="ml-auto flex items-center gap-[10px] pr-2">
    {line && <Divider className="h-3" />}
    <svg width="4" height="6" viewBox="0 0 4 6" className="fill-[#5f6980]" aria-hidden="true"><path d="M0 0v6l4-3z" /></svg>
  </span>
);

const Extra = ({ children }) => (
  <span className="ml-auto flex items-center gap-[10px] pr-[5px]">
    <Divider className="h-4" />
    {children}
  </span>
);

const Shortcut = ({ children }) => <span className="ml-auto pr-[17px] text-[13px] text-[#7f858f]">{children}</span>;

const InsertCount = ({ label }) => (
  <span className="ml-auto flex items-center pr-[5px]">
    <span className="flex h-[23px] w-16 items-center rounded-xs border border-[#d9dce3] pr-1">
      <input aria-label={label} defaultValue="1" className="w-full min-w-0 pl-1 outline-none" />
      <span className="flex flex-col gap-[7px]">
        <Caret className="rotate-180" />
        <Caret />
      </span>
    </span>
    <Svg w={12} className="ml-1"><path d="M.500 6l4 4L11.500 2" strokeWidth="1.500" /></Svg>
  </span>
);

const menuItems = [
  { icon: <Copy />, label: '复制(C)', end: <Shortcut>Ctrl+C</Shortcut> },
  { icon: <Scissors />, label: '剪切(T)', end: <Shortcut>Ctrl+X</Shortcut> },
  { icon: <Paste />, label: '粘贴(P)', end: <Extra><PasteText /></Extra> },
  { icon: <PasteSpecial />, label: '选择性粘贴(S)...' },
  null,
  { icon: <Brush />, label: '格式刷(O)', end: <Extra><Brushes /></Extra> },
  null,
  { icon: <InsertLeft />, label: '在左侧插入列(I)', end: <InsertCount label="左侧列数" /> },
  { icon: <InsertRight />, label: '在右侧插入列(R)', end: <InsertCount label="右侧列数" /> },
  { label: '删除(D)' },
  { icon: <ClearContent />, label: '清除内容(N)', end: <SubArrow line /> },
  null,
  {
    icon: <ColWidth />,
    label: '列宽(W)...',
    end: (
      <span className="ml-auto flex items-center pr-[7px]">
        <Divider className="mr-[9px] h-4" />
        <BestFit />
        <span className="ml-2">最适合的列宽</span>
      </span>
    ),
  },
  { label: '隐藏(H)' },
  { label: '取消隐藏(U)' },
  { icon: <FormatCell />, label: '设置单元格格式(F)...', end: <Shortcut>Ctrl+1</Shortcut> },
  null,
  { icon: <FilterCol />, label: '筛选列', end: <SubArrow /> },
  null,
  { icon: <Beautify />, label: '表格整理美化' },
  null,
  { icon: <ExportImg />, label: '输出单元格为图片', end: <Coin /> },
  { label: '批量处理单元格(Q)', end: <SubArrow line /> },
];

const ContextMenu = () => (
  <ul className="absolute top-[253px] left-[403px] z-20 w-[255px] border border-[#c9d3cf] bg-white shadow-[0_0_3px_rgba(0,0,0,0.2)]">
    {menuItems.map((item, i) =>
      item ? (
        <li key={item.label} className={clsx('flex items-center pl-[7px]', item.icon ? 'h-7' : 'h-[27px]')}>
          <span className="w-[26px]">{item.icon}</span>
          <span>{item.label}</span>
          {item.end}
        </li>
      ) : (
        <li key={i} className="my-1 h-px bg-[#e3e5e9]" />
      ),
    )}
  </ul>
);

const RedArrow = () => (
  <svg
    width="40"
    height="124"
    viewBox="0 0 40 124"
    className="absolute top-[636px] left-[450px] z-30 drop-shadow-[3px_3px_2px_rgba(0,0,0,0.45)]"
    aria-hidden="true"
  >
    <path d="M27 5L34 28l-7-4L9 117l-3-1L22 24l-7 1z" fill="#fe0000" stroke="#d40000" strokeWidth=".5" />
  </svg>
);

const Popup = () => (
  <div className="absolute right-[6px] bottom-[93px] z-30 h-[75px] w-[269px] border border-[#12151c] bg-[#1d212b] shadow-[0_0_6px_rgba(0,0,0,0.4)]">
    <svg width="42" height="42" viewBox="0 0 42 42" className="absolute -top-[12px] left-[15px]" aria-hidden="true">
      <circle cx="21" cy="21" r="20" fill="#343b49" stroke="#1b1f28" />
      <path d="M11 14q6-3 10-3t10 3q1 14-10 20Q10 28 11 14zM12 15l9 8 9-8" fill="none" stroke="#cdd3e2" strokeWidth="2.400" />
    </svg>
    <button aria-label="关闭提示" className="absolute top-[7px] right-[7px] text-[#7d828c]">
      <Svg w={10}><path d="M.500.500l9 9M9.500.500l-9 9" strokeWidth="1" /></Svg>
    </button>
    <p className="pt-2 pl-[72px] text-[13px] leading-5 text-white">
      有 <span className="text-[#f6d312]">24</span> 个无用的残留进程
    </p>
    <div className="mt-[13px] flex items-center justify-between pr-2 pl-[15px]">
      <span className="text-[#6c717c]">立即加速释放电脑内存</span>
      <button className="h-[21px] w-[72px] bg-[#04c17b] text-white">立即加速</button>
    </div>
  </div>
);

const Watermark = () => (
  <div className="pointer-events-none absolute right-[10px] bottom-[4px] z-30 flex items-center gap-[2px] opacity-85">
    <svg width="43" height="42" viewBox="0 0 43 42" fill="none" aria-hidden="true">
      <path d="M41 2C22 1 2 12 1 25c0 6 4 8 9 8C4 26 13 9 41 2z" fill="#4aa3dc" />
      <path d="M38 16c6 6 2 19-13 22-7 2-14 2-20 1 12-1 26-5 28-14 1-4-2-6-6-5 3-4 8-5 11-4z" fill="#7cc56b" />
      <path d="M29 16c-8-3-17 3-15 9 2 5 10 2 10-1M14 25q-2 4 4 4 6-1 10-7" stroke="#3f8fd0" strokeWidth="2" />
      <path d="M5 39q14 0 22-6" stroke="#e6cf4d" strokeWidth="2" />
    </svg>
    <div className="leading-none">
      <p className="text-[21px] leading-[25px] font-bold text-[#4a94d8]">极光下载站</p>
      <p className="font-['Open_Sans'] text-[16px] leading-[17px] font-semibold text-[#5bbd6b]">www.xz7.com</p>
    </div>
  </div>
);

export default function App() {
  return (
    <div className="relative flex h-screen flex-col overflow-hidden bg-[#f6f7f9] font-['Open_Sans','Noto_Sans_CJK_SC',sans-serif] text-[12px] text-[#2b3244]">
      <TitleBar />
      <MenuBar />
      <Ribbon />
      <div className="flex min-h-0 grow">
        <main className="flex min-w-0 grow flex-col">
          <FormulaBar />
          <div className="flex min-h-0 grow">
            <Sheet />
            <VScroll />
          </div>
          <SheetTabs />
        </main>
        <SideBar />
      </div>
      <StatusBar />
      <MiniToolbar />
      <ContextMenu />
      <RedArrow />
      <Popup />
      <Watermark />
    </div>
  );
}
